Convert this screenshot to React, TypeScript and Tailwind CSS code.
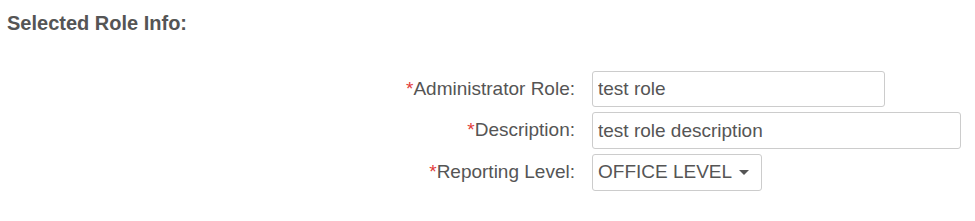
export default function App() {
  return (
    <div className="w-[975px] h-[221px] bg-white font-['Liberation_Sans',Arial,sans-serif] text-[#555]">
      <h2 className="pl-[7px] pt-[12px] text-[20px] leading-[22px] font-bold">Selected Role Info:</h2>

      <div className="mt-[37px] flex flex-col gap-[5px]">
        <div className="flex items-center">
          <label className="w-[575px] text-right text-[19px]">
            <span className="text-[#e23b3b]">*</span>Administrator Role:
          </label>
          <input
            readOnly
            value="test role"
            className="ml-[17px] w-[293px] h-[36px] rounded-[3px] border border-[#ccc] px-[5px] text-[19px] text-[#555] outline-none"
          />
        </div>
        <div className="flex items-center">
          <label className="w-[575px] text-right text-[19px]">
            <span className="text-[#e23b3b]">*</span>Description:
          </label>
          <input
            readOnly
            value="test role description"
            className="ml-[17px] w-[369px] h-[37px] rounded-[3px] border border-[#ccc] px-[5px] text-[19px] text-[#555] outline-none"
          />
        </div>
        <div className="flex items-center">
          <label className="w-[575px] text-right text-[19px]">
            <span className="text-[#e23b3b]">*</span>Reporting Level:
          </label>
          <div className="ml-[17px] w-[170px] h-[37px] rounded-[3px] border border-[#ccc] flex items-center pl-[5px] gap-[7px] text-[19px]">
            <span>OFFICE LEVEL</span>
            <span className="w-0 h-0 border-l-[5px] border-r-[5px] border-t-[5px] border-l-transparent border-r-transparent border-t-[#555]" />
          </div>
        </div>
      </div>
    </div>
  );
}
